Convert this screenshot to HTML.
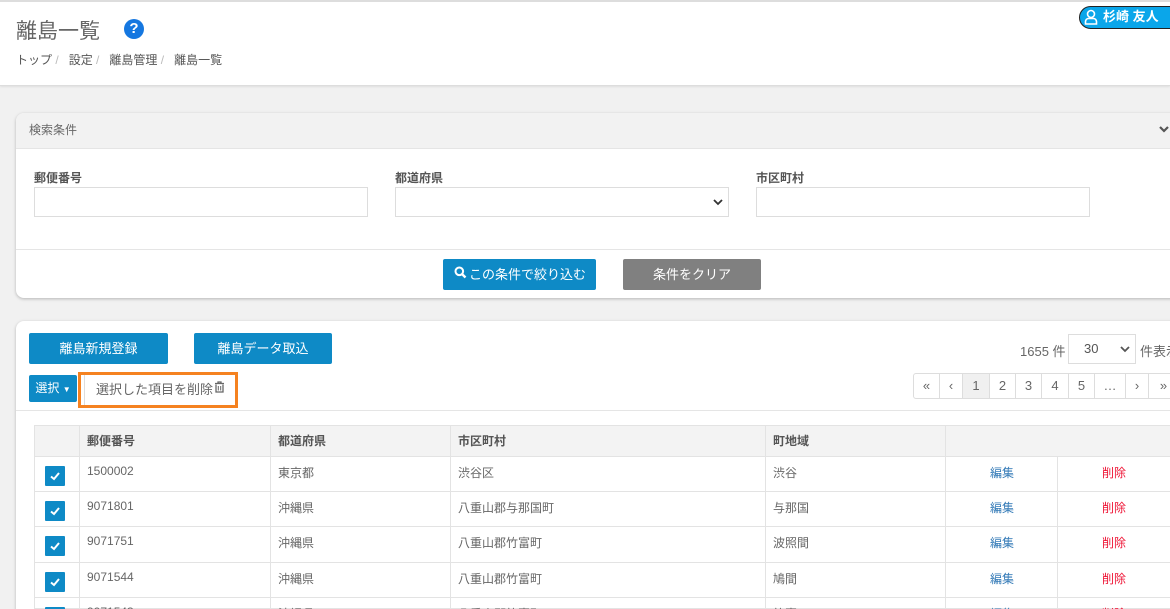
<!DOCTYPE html>
<html style="width:1170px;height:609px;overflow:hidden"><head><meta charset="utf-8"><style>
*{box-sizing:border-box;margin:0;padding:0}
body{width:1170px;height:609px;overflow:hidden;background:#f1f1f1;font-family:"Liberation Sans","Noto Sans CJK JP",sans-serif;color:#555;position:relative;font-size:12px}
.a{position:absolute}
.hdr{left:0;top:0;width:1170px;height:86px;background:#fff;border-top:2px solid #ddd;border-bottom:1px solid #ddd;box-shadow:0 1px 2px rgba(0,0,0,.08)}
.card{background:#fff;border-radius:8px;box-shadow:0 1px 3px rgba(0,0,0,.25)}
.btn{color:#fff;background:#0e8ac6;border-radius:2px;text-align:center;font-size:13px}
.inp{border:1px solid #ddd;background:#fff;height:30px}
.lbl{font-weight:bold;font-size:12px;color:#555}
.pg{top:373px;height:26px;border:1px solid #ddd;border-left:none;text-align:center;line-height:24px;font-size:13px;color:#666;background:#fff}
.cb{width:20px;height:20px;background:#0e8ac6;border-radius:1px}
</style></head><body>
<div class="a hdr"></div>
<div class="a" style="left:16px;top:15px;font-size:21px;color:#666">離島一覧</div>
<div class="a" style="left:124px;top:19px;width:20px;height:20px;border-radius:50%;background:#1577e0;color:#fff;font-weight:bold;font-size:15px;text-align:center;line-height:20px">?</div>
<div class="a" style="left:16px;top:51px;font-size:12px;color:#555">トップ<span style="color:#bbb"> / </span>&nbsp;&nbsp;設定<span style="color:#bbb"> / </span>&nbsp;&nbsp;離島管理<span style="color:#bbb"> / </span>&nbsp;&nbsp;離島一覧</div>
<div class="a" style="left:1079px;top:6px;width:110px;height:23px;border-radius:12px;background:#0aa6ea;border:1px solid #222;color:#fff;font-weight:bold;font-size:13px;line-height:20px;padding-left:23px">杉崎 友人</div>
<svg class="a" style="left:1084px;top:9px" width="14" height="16" viewBox="0 0 14 16"><circle cx="7" cy="5" r="3.5" fill="none" stroke="#fff" stroke-width="1.6"/><path d="M1.5 15v-2.5a3 3 0 0 1 3-3h5a3 3 0 0 1 3 3V15z" fill="none" stroke="#fff" stroke-width="1.6"/></svg>

<div class="a card" style="left:16px;top:113px;width:1170px;height:185px;overflow:hidden">
 <div style="height:36px;background:#f2f2f2;border-bottom:1px solid #e5e5e5;padding:8px 0 0 13px;color:#666;font-size:12px">検索条件</div>
</div>
<svg class="a" style="left:1158px;top:125px" width="12" height="10" viewBox="0 0 12 10"><path d="M2 2l4 4 4-4" fill="none" stroke="#555" stroke-width="2.2"/></svg>
<div class="a lbl" style="left:34px;top:169px">郵便番号</div>
<div class="a lbl" style="left:395px;top:169px">都道府県</div>
<div class="a lbl" style="left:756px;top:169px">市区町村</div>
<div class="a inp" style="left:34px;top:187px;width:334px"></div>
<div class="a inp" style="left:395px;top:187px;width:334px"></div>
<svg class="a" style="left:713px;top:198px" width="10" height="8" viewBox="0 0 10 8"><path d="M1 2l4 4 4-4" fill="none" stroke="#333" stroke-width="1.8"/></svg>
<div class="a inp" style="left:756px;top:187px;width:334px"></div>
<div class="a" style="left:16px;top:249px;width:1154px;height:1px;background:#e5e5e5"></div>
<div class="a btn" style="left:443px;top:259px;width:153px;height:31px;line-height:31px;padding-left:16px">この条件で絞り込む</div>
<svg class="a" style="left:454px;top:266px" width="13" height="13" viewBox="0 0 13 13"><circle cx="5.3" cy="5.3" r="3.8" fill="none" stroke="#fff" stroke-width="2"/><path d="M8 8l3.5 3.5" stroke="#fff" stroke-width="2.4"/></svg>
<div class="a btn" style="left:623px;top:259px;width:138px;height:31px;line-height:31px;background:#808080">条件をクリア</div>

<div class="a card" style="left:16px;top:321px;width:1170px;height:300px"></div>
<div class="a btn" style="left:29px;top:333px;width:139px;height:31px;line-height:31px">離島新規登録</div>
<div class="a btn" style="left:194px;top:333px;width:138px;height:31px;line-height:31px">離島データ取込</div>
<div class="a" style="left:1020px;top:341px;font-size:13px;color:#666">1655 件</div>
<div class="a inp" style="left:1068px;top:334px;width:68px;height:30px;font-size:13px;line-height:28px;padding-left:15px;color:#555">30</div>
<svg class="a" style="left:1120px;top:345px" width="10" height="8" viewBox="0 0 10 8"><path d="M1 2l4 4 4-4" fill="none" stroke="#555" stroke-width="1.8"/></svg>
<div class="a" style="left:1140px;top:341px;font-size:13px;color:#666;white-space:nowrap">件表示</div>
<div class="a btn" style="left:29px;top:375px;width:48px;height:27px;line-height:27px;font-size:12px">選択 <span style="font-size:8px">▼</span></div>
<div class="a" style="left:78px;top:372px;width:160px;height:36px;border:3px solid #f58220;background:#fff"></div>
<div class="a" style="left:84px;top:375px;width:1px;height:30px;background:#ddd"></div>
<div class="a" style="left:96px;top:379px;font-size:13px;color:#666">選択した項目を削除</div>
<svg class="a" style="left:214px;top:381px" width="11" height="12" viewBox="0 0 11 12"><path d="M1 2.5h9M4 2.5V1h3v1.5M2 3.5v7.5h7V3.5" fill="none" stroke="#666" stroke-width="1.3"/><path d="M4.3 5v4.5M6.7 5v4.5" stroke="#666" stroke-width="1"/></svg>
<div class="a pg" style="left:913px;width:27px;border-left:1px solid #ddd;border-radius:3px 0 0 3px">«</div>
<div class="a pg" style="left:940px;width:23px">‹</div>
<div class="a pg" style="left:963px;width:27px;background:#f0f0f0">1</div>
<div class="a pg" style="left:990px;width:26px">2</div>
<div class="a pg" style="left:1016px;width:26px">3</div>
<div class="a pg" style="left:1042px;width:27px">4</div>
<div class="a pg" style="left:1069px;width:26px">5</div>
<div class="a pg" style="left:1095px;width:31px">…</div>
<div class="a pg" style="left:1126px;width:23px">›</div>
<div class="a pg" style="left:1149px;width:30px">»</div>
<div class="a" style="left:16px;top:410px;width:1154px;height:1px;background:#e5e5e5"></div>

<div class="a" style="left:34px;top:425px;width:1136px;height:32px;background:#f3f3f3;border-top:1px solid #e3e3e3;border-left:1px solid #e3e3e3"></div>
<div id="t"></div>
<script>
var cols=[34,79,270,450,765,945,1057,1170];
var hd=["","郵便番号","都道府県","市区町村","町地域"];
var rows=[["1500002","東京都","渋谷区","渋谷"],["9071801","沖縄県","八重山郡与那国町","与那国"],["9071751","沖縄県","八重山郡竹富町","波照間"],["9071544","沖縄県","八重山郡竹富町","鳩間"],["9071543","沖縄県","八重山郡竹富町","竹富"]];
var ys=[457,492,527,563,598,609];var h="";
h+='<div class="a" style="left:34px;top:456px;width:1136px;height:1px;background:#e3e3e3"></div>';
[79,270,450,765,945].forEach(function(x){h+='<div class="a" style="left:'+x+'px;top:425px;width:1px;height:32px;background:#e3e3e3"></div>'});
for(var i=1;i<5;i++)h+='<div class="a lbl" style="left:'+(cols[i]+8)+'px;top:432px">'+hd[i]+'</div>';
rows.forEach(function(r,k){var y=ys[k],hh=ys[k+1]-y;
 h+='<div class="a" style="left:34px;top:'+y+'px;width:1136px;height:'+hh+'px;background:#fff;border-left:1px solid #e3e3e3;border-bottom:1px solid #e3e3e3;overflow:hidden"></div>';
 [79,270,450,765,945,1057].forEach(function(x){h+='<div class="a" style="left:'+x+'px;top:'+y+'px;width:1px;height:'+hh+'px;background:#e3e3e3"></div>'});
 h+='<div class="a cb" style="left:45px;top:'+(y+9)+'px"><svg width="20" height="20" viewBox="0 0 20 20"><path d="M6 10.5l3 2.5 5-6" fill="none" stroke="#fff" stroke-width="2"/></svg></div>';
 for(var i=0;i<4;i++)h+='<div class="a" style="left:'+(cols[i+1]+8)+'px;top:'+(y+7)+'px;font-size:12px;color:#666">'+r[i]+'</div>';
 h+='<div class="a" style="left:990px;top:'+(y+7)+'px;color:#337ab7">編集</div>';
 h+='<div class="a" style="left:1102px;top:'+(y+7)+'px;color:#ee1133">削除</div>';
});
document.getElementById("t").innerHTML=h;
</script>
</body></html>
